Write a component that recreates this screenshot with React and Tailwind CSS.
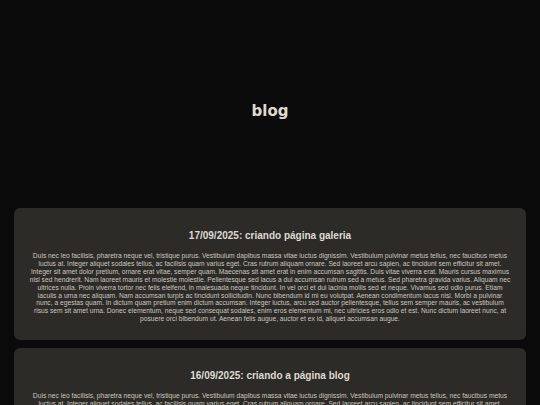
import React from 'react';

const lorem =
  'Duis nec leo facilisis, pharetra neque vel, tristique purus. Vestibulum dapibus massa vitae luctus dignissim. Vestibulum pulvinar metus tellus, nec faucibus metus luctus at. Integer aliquet sodales tellus, ac facilisis quam varius eget. Cras rutrum aliquam ornare. Sed laoreet arcu sapien, ac tincidunt sem efficitur sit amet. Integer sit amet dolor pretium, ornare erat vitae, semper quam. Maecenas sit amet erat in enim accumsan sagittis. Duis vitae viverra erat. Mauris cursus maximus nisl sed hendrerit. Nam laoreet mauris et molestie molestie. Pellentesque sed lacus a dui accumsan rutrum sed a metus. Sed pharetra gravida varius. Aliquam nec ultrices nulla. Proin viverra tortor nec felis eleifend, in malesuada neque tincidunt. In vel orci et dui lacinia mollis sed et neque. Vivamus sed odio purus. Etiam iaculis a urna nec aliquam. Nam accumsan turpis ac tincidunt sollicitudin. Nunc bibendum id mi eu volutpat. Aenean condimentum lacus nisi. Morbi a pulvinar nunc, a egestas quam. In dictum quam pretium enim dictum accumsan. Integer luctus, arcu sed auctor pellentesque, tellus sem semper mauris, ac vestibulum risus sem sit amet urna. Donec elementum, neque sed consequat sodales, enim eros elementum mi, nec ultricies eros odio et est. Nunc dictum laoreet nunc, at posuere orci bibendum ut. Aenean felis augue, auctor et ex id, aliquet accumsan augue.';

const posts = [
  { id: 1, title: '17/09/2025: criando página galeria', body: lorem },
  { id: 2, title: '16/09/2025: criando a página blog', body: lorem },
];

const PostCard = ({ post }) => (
  <div className="bg-[#2d2b28] rounded-[6px] px-[15px] pt-[21px] pb-[17px]">
    <h2 className="text-[10px] leading-[14px] font-bold text-center text-[#dedad2]">{post.title}</h2>
    <p className="mt-[9px] text-[6.7px] leading-[7.9px] text-center text-[#cbc7bf]">{post.body}</p>
  </div>
);

export default function App() {
  return (
    <div className="min-h-screen bg-[#0a0a0a] font-['Liberation_Sans',Arial,sans-serif]">
      <header className="h-[208px] flex items-center justify-center pt-[14px]">
        <h1 className="text-[15px] font-bold text-[#dedad2] font-['DejaVu_Sans',sans-serif]">blog</h1>
      </header>
      <main className="px-[14px] flex flex-col gap-[8px] pb-4">
        {posts.map((post) => (
          <PostCard key={post.id} post={post} />
        ))}
      </main>
    </div>
  );
}
